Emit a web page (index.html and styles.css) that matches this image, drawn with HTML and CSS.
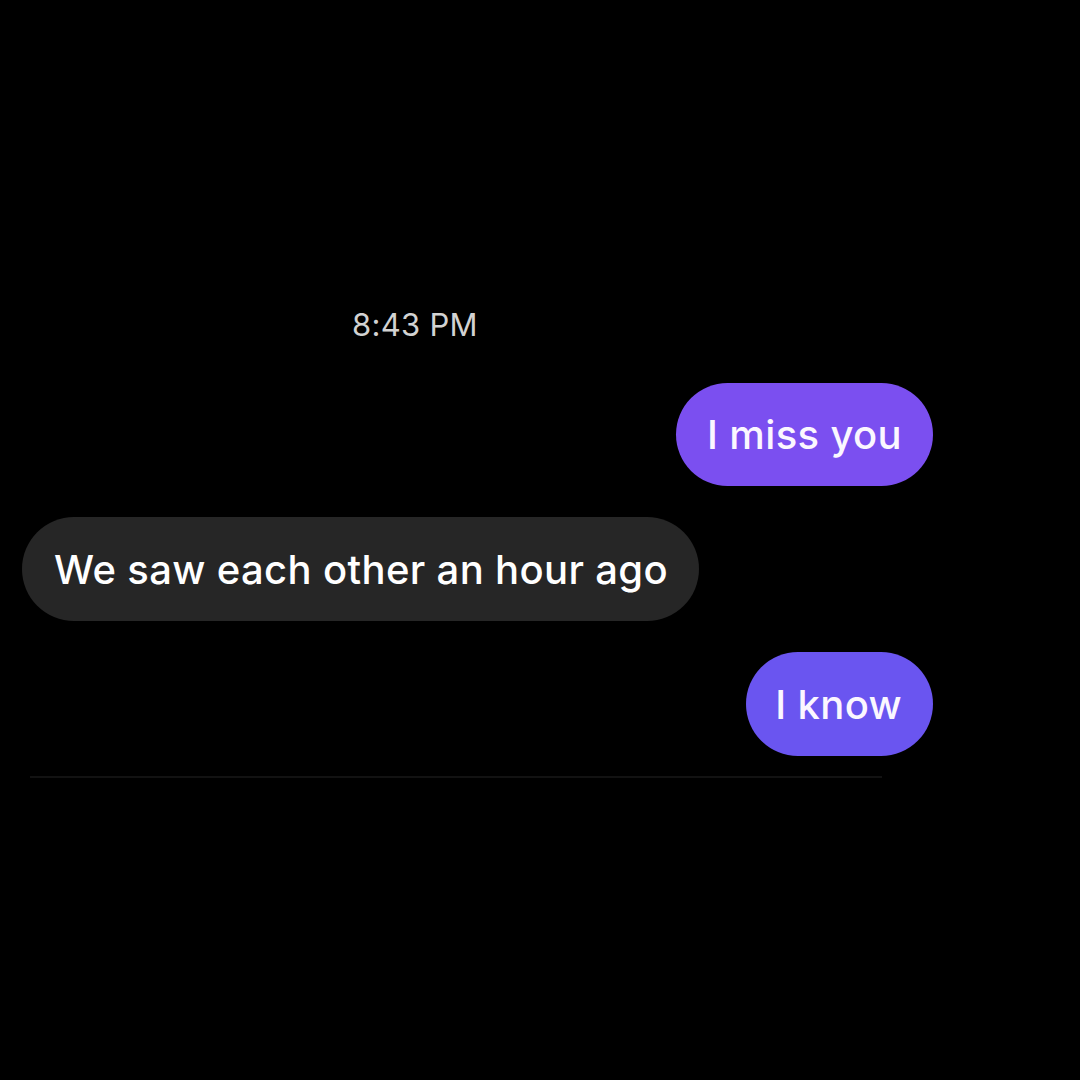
FILE: index.html
```html
<!DOCTYPE html>
<html lang="en">
<head>
<meta charset="utf-8">
<title>Chat</title>
<link rel="stylesheet" href="styles.css">
</head>
<body>
<main class="chat">
  <div class="time">8:43 PM</div>
  <div class="row row-out">
    <div class="bubble out out-1">I miss you</div>
  </div>
  <div class="row row-in">
    <div class="bubble in">We saw each other an hour ago</div>
  </div>
  <div class="row row-out">
    <div class="bubble out out-2">I know</div>
  </div>
  <div class="divider"></div>
</main>
</body>
</html>
```

FILE: styles.css
```css
html, body {
  margin: 0;
  padding: 0;
  background: #000;
}
body {
  width: 1080px;
  height: 1080px;
  overflow: hidden;
  font-family: Inter, "Liberation Sans", Arial, sans-serif;
}
.chat {
  display: flex;
  flex-direction: column;
  padding: 309px 0 0 22px;
  width: 911px;
}
.time {
  margin-left: 330px;
  font-size: 31px;
  line-height: 32px;
  letter-spacing: 0.3px;
  color: #d2d2d2;
  margin-bottom: 42px;
}
.row {
  display: flex;
}
.row-out {
  justify-content: flex-end;
}
.row-in {
  justify-content: flex-start;
  margin: 31px 0;
}
.bubble {
  display: flex;
  align-items: center;
  height: 104px;
  box-sizing: border-box;
  padding: 0 31px 0 31px;
  border-radius: 52px;
  font-size: 40px;
  font-weight: 500;
  letter-spacing: 0.35px;
  color: #fbf7ff;
  white-space: nowrap;
}
.out-1 {
  height: 103px;
  background: #7b4ff0;
}
.out-2 {
  padding: 0 31px 0 29px;
  background: #6a55f0;
}
.in {
  background: #262626;
  padding: 0 31px 0 32px;
  color: #fff;
}
.divider {
  margin: 20px 0 0 8px;
  width: 852px;
  height: 2px;
  background: #121212;
}
```
